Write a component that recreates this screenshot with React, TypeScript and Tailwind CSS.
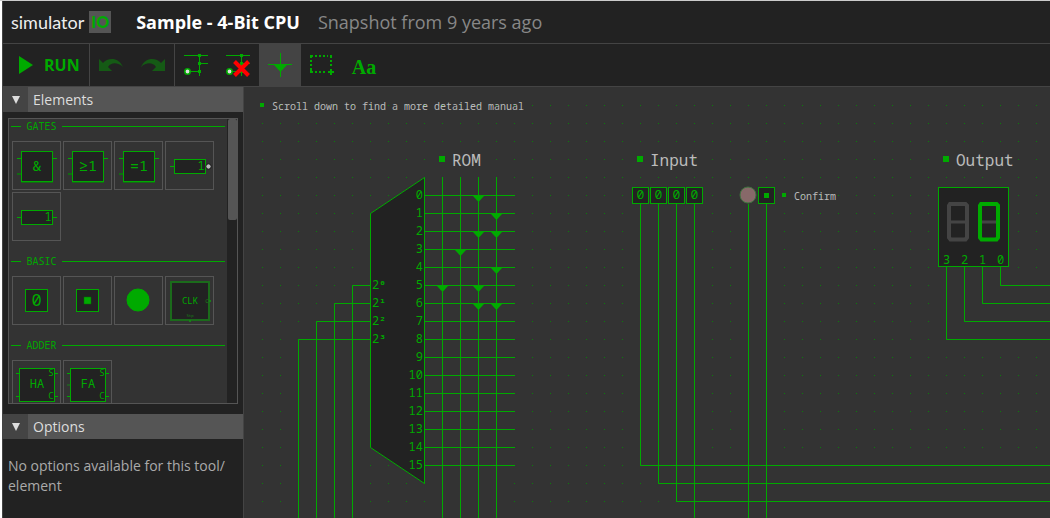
import type { ReactNode } from 'react';

const GREEN = '#00aa00';
const UNIT = 18;
const MONO = 'font-["Noto_Sans_Mono","DejaVu_Sans_Mono",monospace]';

/* ---------- palette ---------- */

type TileProps = { label: string; children: ReactNode };

function Tile({ label, children }: TileProps) {
  return (
    <button type="button" aria-label={label} className="size-[49px] shrink-0 border border-[#555]">
      <svg viewBox="1 1 47 47" className="block size-full" fill="none" stroke={GREEN}>
        {children}
      </svg>
    </button>
  );
}

type GlyphProps = { x: number; y: number; size: number; children: string; fill?: string };

function Glyph({ x, y, size, children, fill = GREEN }: GlyphProps) {
  return (
    <text x={x} y={y} fontSize={size} textAnchor="middle" fill={fill} stroke="none">
      {children}
    </text>
  );
}

function Gate({ symbol }: { symbol: string }) {
  return (
    <>
      <path d="M5 17.5h4M41 17.5h4" />
      <path d="M5 33h4M9 41h32" stroke="#126a12" strokeWidth="2" />
      <rect x="9.5" y="10.5" width="31" height="30" fill="#222" />
      <Glyph x={25} y={30} size={15}>{symbol}</Glyph>
    </>
  );
}

function Buffer({ inverted = false }: { inverted?: boolean }) {
  return (
    <>
      <path d="M5 25.5h4M41 25.5h4" />
      <rect x="9.5" y="18.5" width="31" height="14" fill="#222" />
      <Glyph x={36} y={29} size={12}>1</Glyph>
      {inverted && <circle cx="43.5" cy="25.5" r="2.700" fill="#bbb" stroke="#111" />}
    </>
  );
}

function Adder({ name, full = false }: { name: string; full?: boolean }) {
  return (
    <>
      <path d="M4 13.5h3M4 36.5h3M43 13.5h3M43 36.5h3" />
      {full && <path d="M4 25h3" stroke="#178017" />}
      <rect x="7.5" y="8.5" width="35" height="33" fill="#222" />
      <Glyph x={25} y={28} size={12}>{name}</Glyph>
      <Glyph x={39} y={16} size={9}>S</Glyph>
      <Glyph x={39} y={39} size={9}>C</Glyph>
    </>
  );
}

function Group({ title, children }: { title: string; children: ReactNode }) {
  return (
    <section className="pb-[13px]">
      <h3 className="mx-[2px] flex h-[15px] items-center text-[10px] leading-[15px] text-[#00aa00]">
        <span className="h-px w-[10px] bg-[#00aa00]" />
        <span className="w-[41px] text-center">{title}</span>
        <span className="h-px flex-1 bg-[#00aa00]" />
      </h3>
      <div className="mt-[7px] ml-[3px] flex flex-wrap gap-[2px]">{children}</div>
    </section>
  );
}

function PanelHeader({ title }: { title: string }) {
  return (
    <h2 className="flex h-[25px] shrink-0 items-center bg-[#555] text-[14px] text-[#ddd]">
      <button type="button" aria-label={`Collapse ${title}`} className="flex h-full w-[25px] items-center justify-center bg-[#444]">
        <svg width="8" height="8" viewBox="0 0 8 8" fill="#ddd"><path d="M0 0h8L4 8z" /></svg>
      </button>
      <span className="pl-[5px]">{title}</span>
    </h2>
  );
}

function Sidebar() {
  return (
    <aside className="flex w-[241px] shrink-0 flex-col border-r border-[#444] bg-[#222]">
      <PanelHeader title="Elements" />
      <div className="mx-[5px] mt-[6px] mb-[10px] flex h-[286px] shrink-0 border border-[#555] bg-[#333]">
        <div className={`min-w-0 flex-1 overflow-hidden ${MONO}`}>
          <Group title="GATES">
            <Tile label="AND gate"><Gate symbol="&" /></Tile>
            <Tile label="OR gate"><Gate symbol="≥1" /></Tile>
            <Tile label="XOR gate"><Gate symbol="=1" /></Tile>
            <Tile label="Inverter"><Buffer inverted /></Tile>
            <Tile label="Buffer"><Buffer /></Tile>
          </Group>
          <Group title="BASIC">
            <Tile label="Switch">
              <rect x="13.5" y="13.5" width="22" height="22" fill="#222" />
              <Glyph x={24.5} y={30} size={17}>0</Glyph>
            </Tile>
            <Tile label="Push button">
              <rect x="13.5" y="13.5" width="22" height="22" fill="#222" />
              <rect x="21" y="21" width="7" height="7" fill={GREEN} stroke="#007000" strokeWidth="0.5" />
            </Tile>
            <Tile label="Lamp"><circle cx="24" cy="24" r="11" fill={GREEN} /></Tile>
            <Tile label="Clock">
              <rect x="6" y="6" width="38" height="38" fill="#222" stroke="#1b6b1b" strokeWidth="2" />
              <Glyph x={25} y={28} size={9}>CLK</Glyph>
              <Glyph x={42} y={27} size={6} fill="#178017">C</Glyph>
              <Glyph x={25} y={41} size={4} fill="#178017">Stp</Glyph>
              <path d="M25 44v2M44 25h2" stroke="#178017" strokeWidth="2" />
            </Tile>
          </Group>
          <Group title="ADDER">
            <Tile label="Half adder"><Adder name="HA" /></Tile>
            <Tile label="Full adder"><Adder name="FA" full /></Tile>
          </Group>
        </div>
        <div className="w-[10px] bg-[#222] pl-px">
          <div className="h-[101px] rounded-[2px] bg-[#555]" />
        </div>
      </div>
      <PanelHeader title="Options" />
      <p className="px-[5px] pt-[17px] text-[14px] leading-[20px] text-[#aaa]">No options available for this tool/​element</p>
    </aside>
  );
}

/* ---------- toolbar ---------- */

function WireIcon({ remove = false }: { remove?: boolean }) {
  return (
    <svg width="26" height="26" viewBox="0 0 26 26" fill="none" stroke={GREEN}>
      <path d="M1 3.500h24M16.500 2v22M16 11.500h9M5 19.500h11" />
      <path d="M15 2h3v3h-3zM15 10h3v3h-3zM15 18h3v3h-3z" fill={GREEN} stroke="none" />
      <circle cx="4.500" cy="19.500" r="2.700" fill="#ddd" strokeWidth="1.600" />
      {remove && <path d="M9.500 9.500l14 14M23.500 9.500l-14 14" stroke="#ff0000" strokeWidth="4" />}
    </svg>
  );
}

function ToolButton({ label, active = false, children }: { label: string; active?: boolean; children: ReactNode }) {
  return (
    <button type="button" aria-label={label} className={`flex w-[42px] items-center justify-center ${active ? 'bg-[#444]' : ''}`}>
      {children}
    </button>
  );
}

function BendArrow({ flip = false }: { flip?: boolean }) {
  return (
    <svg width="24" height="14" viewBox="0 0 24 14" fill="#155a15">
      <path
        transform={flip ? 'translate(24 0) scale(-1 1)' : undefined}
        d="M0 1l4 4C9 -1 20 -1 24 9C19 4 12 4 9 9l4 4H0z"
      />
    </svg>
  );
}

function Toolbar() {
  return (
    <nav className="flex h-[43px] shrink-0 border-b border-[#444]">
      <button type="button" className="flex w-[87px] items-center border-r border-[#444] pl-[16px] text-[16px] font-bold text-[#00aa00]">
        <svg width="14" height="18" viewBox="0 0 14 18" fill={GREEN}><path d="M0 0l14 9L0 18z" /></svg>
        <span className="ml-[11px]">RUN</span>
      </button>
      <div className="flex w-[85px] border-r border-[#444]">
        <ToolButton label="Undo"><BendArrow /></ToolButton>
        <ToolButton label="Redo"><BendArrow flip /></ToolButton>
      </div>
      <ToolButton label="Draw wire"><WireIcon /></ToolButton>
      <ToolButton label="Delete"><WireIcon remove /></ToolButton>
      <ToolButton label="Diode" active>
        <svg width="24" height="24" viewBox="0 0 24 24" stroke={GREEN} fill={GREEN}>
          <path d="M0 11.500h24M12.500 0v24" />
          <path d="M6 12h13l-6.500 7z" stroke="none" />
        </svg>
      </ToolButton>
      <ToolButton label="Select area">
        <svg width="24" height="20" viewBox="0 0 24 20" fill="none" stroke={GREEN} strokeWidth="2">
          <path d="M0 1h3M5 1h2M9 1h2M13 1h2M17 1h1M20 1h2" />
          <path d="M0 17h3M5 17h2M9 17h2M13 17h2" />
          <path d="M1 0v3M1 5v2M1 9v2M1 13v5M21 0v3M21 5v2M21 9v2" />
          <path d="M18 17h6M21 14v6" />
        </svg>
      </ToolButton>
      <ToolButton label="Text">
        <span className="pt-1 font-['Liberation_Serif',serif] text-[20px] font-bold text-[#00aa00]">Aa</span>
      </ToolButton>
    </nav>
  );
}

/* ---------- circuit ---------- */

const diodes = [[13, 6], [14, 7], [13, 8], [14, 8], [12, 9], [14, 10], [11, 11], [13, 11], [13, 12], [14, 12]];
const at = (n: number) => n * UNIT + 0.5;

function Label({ x, y, size, children }: { x: number; y: number; size: number; children: string }) {
  const large = size > 12;
  const side = large ? 6 : 4;
  return (
    <g>
      <rect x={x - side / 2} y={y - side / 2} width={side} height={side} fill={GREEN} />
      <text x={x + 10} y={y + (large ? 7 : 5)} fontSize={size} fill="#bbb">{children}</text>
    </g>
  );
}

function SevenSegment({ x, lit = false }: { x: number; lit?: boolean }) {
  return (
    <g fill="none" strokeWidth="4" transform={`translate(${x} 115)`}>
      <path d="M3 20h16" stroke="#444" strokeWidth="3" />
      <path d="M3 2h15.500l1.500 1.500v32l-1.500 2H3.500l-1.500 -2V3.500z" stroke={lit ? GREEN : '#444'} />
    </g>
  );
}

function Circuit() {
  return (
    <main className="min-w-0 flex-1 overflow-hidden bg-[#333]">
      <svg width="100%" height="100%" className={`block ${MONO}`} stroke="none">
        <defs>
          <pattern id="dots" width={UNIT} height={UNIT} patternUnits="userSpaceOnUse">
            <rect width="1" height="1" fill="#0a7f0a" />
          </pattern>
        </defs>
        <rect x="5" y="5" width="100%" height="100%" fill="url(#dots)" />

        <g fill="none" stroke={GREEN}>
          {[0, 1, 2, 3].map((i) => (
            <path key={`a${i}`} d={`M${at(7)} ${at(11 + i)}H${at(6 - i)}V2000`} />
          ))}
          {[11, 12, 13, 14].map((n) => <path key={`c${n}`} d={`M${at(n)} 90V2000`} />)}
          {Array.from({ length: 16 }, (_, i) => <path key={`r${i}`} d={`M180 ${at(6 + i)}H271`} />)}
          <path d={`M${at(10)} ${at(5)}L${at(7)} ${at(7)}V${at(20)}L${at(10)} ${at(22)}z`} fill="#222" />
          {[0, 1, 2].map((i) => (
            <path key={`i${i}`} d={`M${at(22 + i)} 117V${at(21 + i)}H4000`} />
          ))}
          {[25, 28, 29].map((n) => <path key={`v${n}`} d={`M${at(n)} 117V2000`} />)}
          {[0, 1, 2, 3].map((i) => (
            <path key={`o${i}`} d={`M${at(42 - i)} 180V${at(11 + i)}H4000`} />
          ))}
        </g>

        {diodes.map(([c, r]) => (
          <path key={`${c}-${r}`} d={`M${at(c) - 6} ${at(r)}h12l-6 6.500z`} fill={GREEN} />
        ))}

        <g fill={GREEN} fontSize="12">
          {Array.from({ length: 16 }, (_, i) => (
            <text key={i} x="179" y={112 + i * UNIT} textAnchor="end">{i}</text>
          ))}
          {['⁰', '¹', '²', '³'].map((exponent, i) => (
            <text key={exponent} x="128" y={202 + i * UNIT}>
              2<tspan className="font-['DejaVu_Sans_Mono',monospace] font-bold" fontSize="11">{exponent}</tspan>
            </text>
          ))}
        </g>

        {[22, 23, 24, 25].map((n) => (
          <g key={n}>
            <rect x={n * UNIT - 7.5} y="100.500" width="16" height="16" fill="#222" stroke={GREEN} />
            <text x={at(n)} y="112" fontSize="13" textAnchor="middle" fill={GREEN}>0</text>
          </g>
        ))}
        <circle cx="504" cy="108" r="8" fill="#876969" stroke="#3f733f" />
        <rect x="514.500" y="100.500" width="16" height="16" fill="#222" stroke={GREEN} />
        <rect x="520" y="106" width="5" height="5" fill={GREEN} />

        <rect x="694.500" y="100.500" width="70" height="79" fill="#222" stroke={GREEN} />
        <SevenSegment x={703} />
        <SevenSegment x={734} lit />
        {[3, 2, 1, 0].map((d, i) => (
          <text key={d} x={at(39 + i)} y="177" fontSize="12" textAnchor="middle" fill={GREEN}>{d}</text>
        ))}

        <Label x={18} y={18} size={10}>Scroll down to find a more detailed manual</Label>
        <Label x={198} y={72} size={16}>ROM</Label>
        <Label x={396} y={72} size={16}>Input</Label>
        <Label x={540} y={108} size={10}>Confirm</Label>
        <Label x={702} y={72} size={16}>Output</Label>
      </svg>
    </main>
  );
}

export default function App() {
  return (
    <div className="flex h-screen flex-col border-t border-[#ccc] bg-white pl-[2px] font-['Open_Sans','Noto_Sans',sans-serif]">
      <div className="flex min-h-0 flex-1 flex-col border-l border-[#444] bg-[#222]">
        <header className="flex h-[43px] shrink-0 items-center border-b border-[#444] pl-[8px]">
          <a href="#" className="flex items-center font-['Lato',sans-serif] text-[18px] text-[#eee]">
            simulator
            <span className="ml-[5px] flex size-[22px] items-center justify-center bg-[#555] text-[16px] font-black text-[#00aa00]">IO</span>
          </a>
          <h1 className="ml-[25px] text-[18px] font-bold text-white">Sample - 4-Bit CPU</h1>
          <span className="ml-[18px] text-[18px] text-[#888]">Snapshot from 9 years ago</span>
        </header>
        <Toolbar />
        <div className="flex min-h-0 flex-1">
          <Sidebar />
          <Circuit />
        </div>
      </div>
    </div>
  );
}
